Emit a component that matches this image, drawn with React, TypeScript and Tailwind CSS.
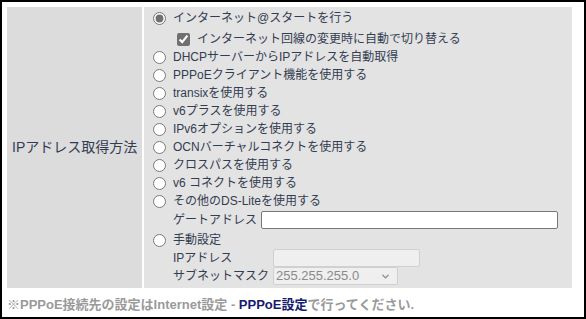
import { ChevronDown } from 'lucide-react';

const options = [
  'DHCPサーバーからIPアドレスを自動取得',
  'PPPoEクライアント機能を使用する',
  'transixを使用する',
  'v6プラスを使用する',
  'IPv6オプションを使用する',
  'OCNバーチャルコネクトを使用する',
  'クロスパスを使用する',
  'v6 コネクトを使用する',
];

function Radio({ checked = false }: { checked?: boolean }) {
  return (
    <input
      type="radio"
      name="ipmode"
      defaultChecked={checked}
      className="m-0 mr-[7px] h-[13px] w-[13px] shrink-0 accent-[#707070]"
    />
  );
}

export default function App() {
  return (
    <div
      className="h-[319px] w-[586px] border-2 border-black bg-white p-[5px] text-[13px] text-[#333d52]"
      style={{ fontFamily: '"Liberation Sans", "Noto Sans CJK JP", sans-serif' }}
    >
      <div className="flex w-[565px] gap-[2px]">
        <div className="flex w-[135px] items-center bg-[#dcdcdc] pl-[5px] text-[14px]">IPアドレス取得方法</div>
        <div className="flex flex-1 flex-col bg-[#e3e3e3] pl-[9px] pt-[2px] text-[12px] leading-[18px]">
          <label className="flex h-[18px] items-center">
            <Radio checked />
            インターネット@スタートを行う
          </label>
          <label className="mt-[3px] flex h-[18px] items-center pl-[24px]">
            <input
              type="checkbox"
              defaultChecked
              className="m-0 mr-[7px] h-[13px] w-[13px] accent-[#707070]"
            />
            インターネット回線の変更時に自動で切り替える
          </label>
          {options.map((o) => (
            <label key={o} className="flex h-[18px] items-center">
              <Radio />
              {o}
            </label>
          ))}
          <label className="flex h-[18px] items-center">
            <Radio />
            その他のDS-Liteを使用する
          </label>
          <div className="flex h-[20px] items-center pl-[20px]">
            <span className="mr-[4px]">ゲートアドレス</span>
            <input
              type="text"
              className="h-[18px] w-[297px] rounded-[2px] border border-[#767676] bg-white px-1 text-[12px]"
            />
          </div>
          <label className="mt-[1px] flex h-[18px] items-center">
            <Radio />
            手動設定
          </label>
          <div className="flex h-[18px] items-center pl-[20px]">
            <span className="w-[100px] shrink-0 whitespace-nowrap">IPアドレス</span>
            <input
              type="text"
              disabled
              className="h-[18px] w-[147px] rounded-[2px] border border-[#d0d0d0] bg-[#efefef]"
            />
          </div>
          <div className="mb-[3px] flex h-[18px] items-center pl-[20px]">
            <span className="w-[100px] shrink-0 whitespace-nowrap">サブネットマスク</span>
            <div className="flex h-[18px] w-[125px] items-center justify-between rounded-[2px] border border-[#d0d0d0] bg-[#efefef] pl-[2px] pr-[6px] text-[13px] text-[#8a8a8a]">
              255.255.255.0
              <ChevronDown className="h-[11px] w-[11px]" strokeWidth={3} />
            </div>
          </div>
        </div>
      </div>
      <p className="mt-[7px] font-bold text-[#9a9a9a]">
        ※PPPoE接続先の設定はInternet設定 - <span className="text-[#141a6e]">PPPoE設定</span>で行ってください.
      </p>
    </div>
  );
}
